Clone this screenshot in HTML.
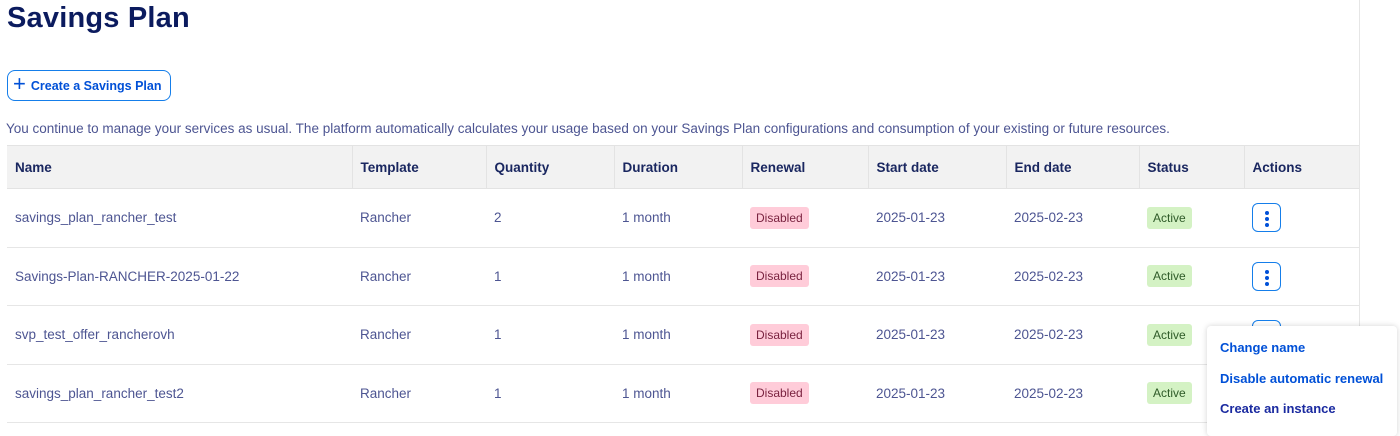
<!DOCTYPE html>
<html><head><meta charset="utf-8"><style>
*{box-sizing:border-box;margin:0;padding:0}
body{width:1400px;height:424px;overflow:hidden;background:#fff;font-family:"Liberation Sans",sans-serif;position:relative;color:#4d5592}
h1{position:absolute;left:7px;top:2px;font-size:29px;font-weight:bold;color:#0b1b5e;letter-spacing:0.2px}
.btn{position:absolute;left:7px;top:70px;width:164px;height:31px;border:1px solid #157eea;border-radius:8px;color:#0050d7;font-weight:bold;font-size:12.5px;display:flex;align-items:center;padding-left:5px;white-space:nowrap}
.btn span.p{font-size:22px;font-weight:normal;margin-right:5px;line-height:1;margin-top:-3px}
.desc{position:absolute;left:6px;top:121px;font-size:13.5px;color:#4d5592;white-space:nowrap}
table{position:absolute;left:7px;top:145px;width:1353px;border-collapse:collapse;font-size:13.5px}
th{background:#f2f2f2;height:43px;text-align:left;padding-left:8px;color:#1a2760;font-weight:bold;border-right:1px solid #e3e3e3;border-top:1px solid #e3e3e3;border-bottom:1px solid #e3e3e3}
th:last-child{border-right:none}
td{height:58.5px;padding-left:8px;border-bottom:1px solid #e6e6e6;color:#4d5592;white-space:nowrap}
.dis{display:inline-block;background:#ffccd9;color:#7a2340;font-size:12px;padding:4px 6px;border-radius:3px}
.act{display:inline-block;background:#d4f2c4;color:#2e5a28;font-size:12px;padding:4px 6px;border-radius:3px}
.kb{display:inline-block;width:29px;height:29px;border:1px solid #157eea;border-radius:6px;position:relative;vertical-align:middle}
.kb i{position:absolute;left:12px;width:4px;height:4px;border-radius:2px;background:#0050d7}
.menu{position:absolute;left:1207px;top:326px;width:190px;height:110px;background:#fff;box-shadow:0 0 6px rgba(0,0,0,.18);border-radius:4px}
.menu div{position:absolute;left:13px;font-size:13px;font-weight:bold;color:#0050d7;white-space:nowrap}
.sb{position:absolute;left:1359px;top:0;width:1px;height:424px;background:#e6e6e6}
</style></head><body>
<h1>Savings Plan</h1>
<div class="btn"><span class="p">+</span>Create a Savings Plan</div>
<div class="desc">You continue to manage your services as usual. The platform automatically calculates your usage based on your Savings Plan configurations and consumption of your existing or future resources.</div>
<table>
<colgroup><col style="width:345px"><col style="width:134px"><col style="width:128px"><col style="width:128px"><col style="width:126px"><col style="width:138px"><col style="width:133px"><col style="width:105px"><col></colgroup>
<tr><th>Name</th><th>Template</th><th>Quantity</th><th>Duration</th><th>Renewal</th><th>Start date</th><th>End date</th><th>Status</th><th>Actions</th></tr>
<tr><td>savings_plan_rancher_test</td><td>Rancher</td><td>2</td><td>1 month</td><td><span class="dis">Disabled</span></td><td>2025-01-23</td><td>2025-02-23</td><td><span class="act">Active</span></td><td><span class="kb"><i style="top:7px"></i><i style="top:13px"></i><i style="top:19px"></i></span></td></tr>
<tr><td>Savings-Plan-RANCHER-2025-01-22</td><td>Rancher</td><td>1</td><td>1 month</td><td><span class="dis">Disabled</span></td><td>2025-01-23</td><td>2025-02-23</td><td><span class="act">Active</span></td><td><span class="kb"><i style="top:7px"></i><i style="top:13px"></i><i style="top:19px"></i></span></td></tr>
<tr><td>svp_test_offer_rancherovh</td><td>Rancher</td><td>1</td><td>1 month</td><td><span class="dis">Disabled</span></td><td>2025-01-23</td><td>2025-02-23</td><td><span class="act">Active</span></td><td><span class="kb"></span></td></tr>
<tr><td>savings_plan_rancher_test2</td><td>Rancher</td><td>1</td><td>1 month</td><td><span class="dis">Disabled</span></td><td>2025-01-23</td><td>2025-02-23</td><td><span class="act">Active</span></td><td></td></tr>
</table>
<div class="sb"></div>
<div class="menu">
<div style="top:14px">Change name</div>
<div style="top:45px">Disable automatic renewal</div>
<div style="top:75px;color:#1a2aa0">Create an instance</div>
</div>
</body></html>
